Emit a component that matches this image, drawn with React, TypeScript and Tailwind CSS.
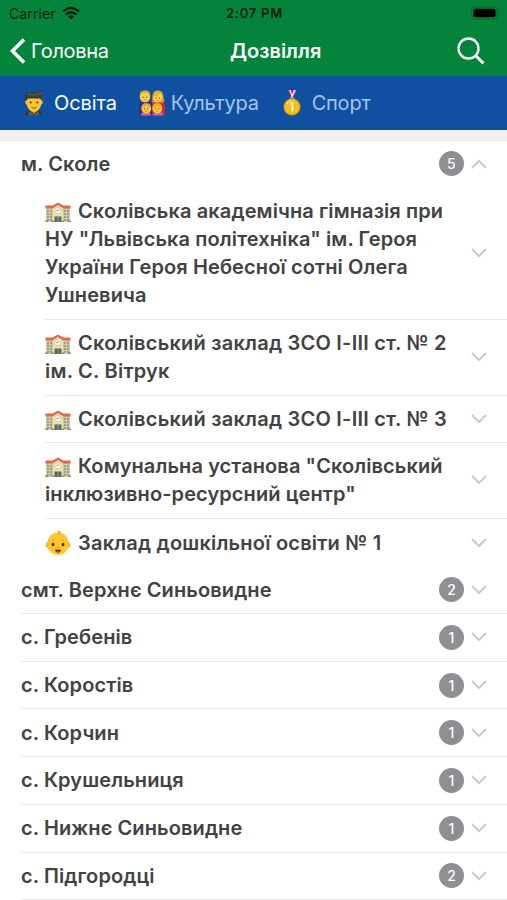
import { useState } from "react";

type IconName = "school" | "baby";

type Place = {
  icon: IconName;
  lines: string[];
  height: string;
  tracking: string;
};

const PLACES: Place[] = [
  {
    icon: "school",
    lines: [
      "Сколівська академічна гімназія при",
      'НУ "Львівська політехніка" ім. Героя',
      "України Героя Небесної сотні Олега",
      "Ушневича",
    ],
    height: "h-[131.5px]",
    tracking: "tracking-[0.11px]",
  },
  {
    icon: "school",
    lines: ["Сколівський заклад ЗСО І-ІІІ ст. № 2", "ім. С. Вітрук"],
    height: "h-[76px]",
    tracking: "tracking-[0.23px]",
  },
  {
    icon: "school",
    lines: ["Сколівський заклад ЗСО І-ІІІ ст. № 3"],
    height: "h-[47.7px]",
    tracking: "tracking-[0.23px]",
  },
  {
    icon: "school",
    lines: ['Комунальна установа "Сколівський', 'інклюзивно-ресурсний центр"'],
    height: "h-[75.5px]",
    tracking: "tracking-[0.09px]",
  },
  {
    icon: "baby",
    lines: ["Заклад дошкільної освіти № 1"],
    height: "h-[47.7px]",
    tracking: "tracking-[0.21px]",
  },
];

const TOWNS = [
  { name: "смт. Верхнє Синьовидне", count: 2 },
  { name: "с. Гребенів", count: 1 },
  { name: "с. Коростів", count: 1 },
  { name: "с. Корчин", count: 1 },
  { name: "с. Крушельниця", count: 1 },
  { name: "с. Нижнє Синьовидне", count: 1 },
  { name: "с. Підгородці", count: 2 },
];

function School() {
  return (
    <svg viewBox="0 0 26 24" className="h-6 w-[26px]">
      <path d="M1 7h24v14H1z" fill="#cfc99d" />
      <path d="M8 7l5-4 5 4v14H8z" fill="#e8e2b4" />
      <path d="M.5 7.500V4.500h7L13 1.500l5.500 3h7v3H18.500L13 4 7.500 7.500z" fill="#e0694b" />
      <path
        d="M2 9h5v2H2zM2 12h5v2H2zM2 15h5v2H2zM2 18h5v2H2zM19 9h5v2h-5zM19 12h5v2h-5zM19 15h5v2h-5zM19 18h5v2h-5z"
        fill="#9b9e90"
      />
      <path d="M4 8h1v13H4zM21 8h1v13h-1z" fill="#d4cda2" />
      <circle cx="13" cy="9.500" r="3.200" fill="#fffef5" stroke="#c9bd8b" strokeWidth="0.700" />
      <path d="M13 9.500l1.500-1.500M13 9.500h-1.500" stroke="#555" strokeWidth="0.700" />
      <path d="M9.500 15.500h7V21h-7z" fill="#566963" />
      <path d="M12.700 15.500h.7V21h-.7z" fill="#b9b083" />
      <path d="M0 19.500h3V21H0zM7 19.500h2V21H7zM17 19.500h2V21h-2zM23 19.500h3V21h-3z" fill="#83995a" />
    </svg>
  );
}

function Baby() {
  return (
    <svg viewBox="0 0 26 26" className="h-[26px] w-[26px]">
      <ellipse cx="3" cy="15" rx="2.200" ry="3" fill="#f3b423" />
      <ellipse cx="23" cy="15" rx="2.200" ry="3" fill="#f3b423" />
      <path
        d="M13 2.500C19.500 2.500 23.800 8 23.800 14c0 6-4.800 11-10.800 11S2.200 20 2.200 14C2.200 8 6.500 2.500 13 2.500z"
        fill="#fcc62c"
      />
      <path d="M11.500 4c2 .6 4.500 0 4.200-1.800C15.300.6 12.900.4 12.400 1.700c1.300-.2 1 1.500-.9 2.300z" fill="#eeb125" />
      <path d="M7 10.500q1.500-1.300 3 0M16 10.500q1.500-1.300 3 0" fill="none" stroke="#c98c24" strokeWidth="0.700" />
      <ellipse cx="8" cy="14.500" rx="1.400" ry="1.800" fill="#4a311d" />
      <ellipse cx="18" cy="14.500" rx="1.400" ry="1.800" fill="#4a311d" />
      <path d="M11.800 17.300q1.200.8 2.400 0" fill="none" stroke="#c77c1f" strokeWidth="0.800" />
      <path d="M10 19.800q3-.8 6 0-.6 3-3 3t-3-3z" fill="#68381c" />
      <path d="M11.500 21.800q1.500-.8 3 0-1.500 1.200-3 0z" fill="#e86c62" />
    </svg>
  );
}

function Graduate() {
  return (
    <svg viewBox="0 0 22 26" className="h-[26px] w-[22px]">
      <path d="M2 25c0-4 3-5.500 9-5.500s9 1.500 9 5.500z" fill="#343c43" />
      <path d="M8 17h6v3l-3 4-3-4z" fill="#e2a02c" />
      <path d="M6.500 20.500L11 25l4.500-4.500.5 4.500H6z" fill="#59626a" />
      <path d="M3.500 8h15v2.500c1.800 0 1.600 3.500-.3 4C17.500 19 14 22 11 22s-6.500-3-7.200-7.500c-1.900-.5-2.100-4-.3-4z" fill="#fbc52d" />
      <path d="M3.300 5.500h15.400v5l-1.800-2H5.100l-1.800 2z" fill="#42342c" />
      <path d="M2.500 3L12 .8 20.500 2l-1.800 5.800Q11 6 3.300 8z" fill="#3b4147" />
      <path d="M3.500 3.700L11 5l8.500-2" fill="none" stroke="#626a70" strokeWidth="0.700" />
      <path d="M3 3.500v7" stroke="#242a30" strokeWidth="1" />
      <circle cx="7.700" cy="12.500" r="1" fill="#4a311d" />
      <circle cx="14.300" cy="12.500" r="1" fill="#4a311d" />
      <path d="M8.500 17.500q2.500 1.500 5 0" fill="none" stroke="#9a5a1a" strokeWidth="1" />
    </svg>
  );
}

function Family() {
  return (
    <svg viewBox="0 0 26 26" className="h-[26px] w-[26px]">
      <path d="M0 25V15q0-3 3-3h10v13z" fill="#2f3189" />
      <path d="M13 25V12h10q3 0 3 3v10z" fill="#cf2738" />
      <path d="M13.500 12.500C12.500 4 15 0 19 .5c4.500.2 6 4 5.500 7.500 1.200 2 1.200 4-.8 4.800z" fill="#e39a20" />
      <circle cx="6" cy="7" r="5.200" fill="#fcd04a" />
      <path d="M.8 6C.3 2 3 .3 6 .4s5.800 1.600 5.200 5.600C10 3.500 8 3 5.500 3S2 4 .8 6z" fill="#e5a829" />
      <circle cx="18.800" cy="7.500" r="4.700" fill="#fcd04a" />
      <path d="M14.500 6.500q5-1 6.500-4l2.500 4-1.500-4.500-4-1.300-3.500 2.300z" fill="#edae29" />
      <path d="M2 25.500q0-4 5-4t5 4zM14 25.500q0-4 5-4t5 4z" fill="#d163be" />
      <circle cx="7.300" cy="18.500" r="4.900" fill="#fcc83d" />
      <circle cx="18.300" cy="18.500" r="4.900" fill="#fcc83d" />
      <path d="M2.500 18c0-3.500 2-4.700 4.800-4.700s4.800 1.200 4.800 4.700q-3-.6-4.800-2.500Q5.500 17.400 2.500 18zM13.500 18c0-3.500 2-4.700 4.800-4.700s4.800 1.200 4.800 4.700q-3-.6-4.800-2.500-1.800 1.900-4.800 2.500z" fill="#eba92a" />
      <path d="M3.700 7.200h1M7.300 7.200h1M16.500 8h1M20 8h1M5.200 18.800h1M8.300 18.800h1M16.200 18.800h1M19.300 18.800h1" stroke="#5e3a1d" strokeWidth="1" />
      <path d="M4.700 10h2.600M17.500 10.500h2.500M6.200 21.200h2M17.300 21.200h2" stroke="#b36122" strokeWidth="0.700" />
    </svg>
  );
}

function Medal() {
  return (
    <svg viewBox="0 0 20 26" className="h-[26px] w-5">
      <path d="M6 0h3.200L11 6l-1 2z" fill="#e74a65" />
      <path d="M14.500 0h-3L8.900 6.500 10 9z" fill="#ed8696" />
      <path d="M7 0h1l2.200 6.500M13.500 0h-1L10.200 6.500" fill="none" stroke="#f8e6ef" strokeWidth="1" />
      <circle cx="10" cy="8.500" r="1.600" fill="none" stroke="#d1c28d" strokeWidth="1" />
      <circle cx="10" cy="17" r="8.500" fill="#dfa40f" />
      <circle cx="10" cy="17" r="7.200" fill="#efc022" />
      <path d="M4.500 14q1.500-3 5-3.500" fill="none" stroke="#ffe85b" strokeWidth="1.200" />
      <path d="M8 14.500l2.500-1.700v8.700" fill="none" stroke="#fff3b0" strokeWidth="1.900" />
    </svg>
  );
}

function Chevron({ up = false }: { up?: boolean }) {
  return (
    <svg viewBox="0 0 16 10" className={`h-2.5 w-4 shrink-0 ${up ? "rotate-180" : ""}`}>
      <path d="M1 1l7 7 7-7" fill="none" stroke="#cbcbce" strokeWidth="2" />
    </svg>
  );
}

function Badge({ count }: { count: number }) {
  return (
    <span className="mr-[7px] flex size-[25px] shrink-0 items-center justify-center rounded-full bg-[#8e8e93] text-[14px] font-medium text-white">
      {count}
    </span>
  );
}

function StatusBar() {
  return (
    <div className="grid h-[26px] grid-cols-3 items-center pt-0.5 text-[13px] text-black/80">
      <div className="flex items-center gap-1.5 pl-[9px]">
        <span className="mb-0.5 text-[14px] tracking-[0.1px]">Carrier</span>
        <svg viewBox="0 0 18 14" className="mb-0.5 h-3.5 w-[18px]">
          <path d="M1 5.300Q9-1.500 17 5.300M3.800 8.500Q9 4.300 14.200 8.500" fill="none" stroke="currentColor" strokeWidth="2.300" />
          <path d="M6 10.500q3-2.300 6 0l-3 3z" fill="currentColor" />
        </svg>
      </div>
      <span className="pl-[2px] text-center font-semibold tracking-[0.75px] whitespace-nowrap">2:07 PM</span>
      <svg viewBox="0 0 30 14" className="mr-[6px] mb-0.5 h-3.5 w-[30px] justify-self-end">
        <rect x="0.700" y="1" width="25.500" height="12" rx="3.500" fill="none" stroke="#04672c" />
        <rect x="2.500" y="2.800" width="22" height="8.500" rx="2" fill="#000" />
        <path d="M27.500 5q2 2 0 4z" fill="#04672c" />
      </svg>
    </div>
  );
}

export default function App() {
  const [tab, setTab] = useState(0);
  const [open, setOpen] = useState(true);

  const tabs = [
    { label: "Освіта", icon: <Graduate />, style: "ml-[23px] gap-[9px]", text: "tracking-[-0.1px]" },
    { label: "Культура", icon: <Family />, style: "ml-[22px] gap-[6px]", text: "tracking-[-0.25px]" },
    { label: "Спорт", icon: <Medal />, style: "ml-[23px] gap-[10px]", text: "tracking-[-0.2px]" },
  ];

  return (
    <div className="h-[900px] w-[507px] overflow-hidden bg-white font-[Inter,'Noto_Sans',sans-serif] text-[#424242]">
      <header className="h-[76px] bg-[#03843a]">
        <StatusBar />
        <div className="flex h-[50px] items-center text-white">
          <button className="flex w-[230px] items-center gap-[5px] pl-[10px] text-[20px] tracking-[-0.3px]">
            <svg viewBox="0 0 16 26" className="h-[26px] w-4">
              <path d="M14 1.500L2.500 13 14 24.500" fill="none" stroke="currentColor" strokeWidth="3.600" />
            </svg>
            <span>Головна</span>
          </button>
          <h1 className="text-[20px] font-semibold">Дозвілля</h1>
          <svg viewBox="0 0 28 28" className="mr-[22px] ml-auto h-7 w-7">
            <circle cx="11.500" cy="11.500" r="10" fill="none" stroke="currentColor" strokeWidth="2.300" />
            <path d="M18.500 18.500l8 8" stroke="currentColor" strokeWidth="3" />
          </svg>
        </div>
      </header>

      <nav className="flex h-[54px] items-center bg-[#1050a0] text-[20px]">
        {tabs.map((t, i) => (
          <button
            key={t.label}
            onClick={() => setTab(i)}
            className={`flex items-center ${t.style} ${i === tab ? "text-white" : "text-[#a5c5ed]"}`}
          >
            {t.icon}
            <span className={t.text}>{t.label}</span>
          </button>
        ))}
      </nav>
      <div className="h-[11px] border-b border-[#e4e4e7] bg-[#efeff4]" />

      <main className="text-[20px] font-semibold tracking-[0.1px]">
        <button
          onClick={() => setOpen(!open)}
          className="flex h-[47px] w-full items-center pr-[20px] pb-[2px] pl-[21px] text-left"
        >
          <span className="flex-1">м. Сколе</span>
          <Badge count={5} />
          <Chevron up={open} />
        </button>

        {open && (
          <ul className="pl-[45px]">
            {PLACES.map((p, i) => (
              <li
                key={i}
                className={`flex items-center pr-[20px] ${p.height} ${
                  i < PLACES.length - 1 ? "border-b border-[#e9e9eb]" : ""
                }`}
              >
                <div className={`flex-1 leading-[28px] whitespace-nowrap ${p.tracking}`}>
                  {p.lines.map((line, n) => (
                    <div key={line} className="flex items-center">
                      {n === 0 && (
                        <span className="mr-[7px] h-[26px] w-[26px]">
                          {p.icon === "school" ? (
                            <span className="block pt-[3px]">
                              <School />
                            </span>
                          ) : (
                            <Baby />
                          )}
                        </span>
                      )}
                      <span>{line}</span>
                    </div>
                  ))}
                </div>
                <Chevron />
              </li>
            ))}
          </ul>
        )}

        <ul className="pl-[21px]">
          {TOWNS.map((town) => (
            <li key={town.name} className="flex h-[47.7px] items-center border-b border-[#e9e9eb] pr-[20px]">
              <span className="flex-1">{town.name}</span>
              <Badge count={town.count} />
              <Chevron />
            </li>
          ))}
        </ul>
      </main>
    </div>
  );
}
